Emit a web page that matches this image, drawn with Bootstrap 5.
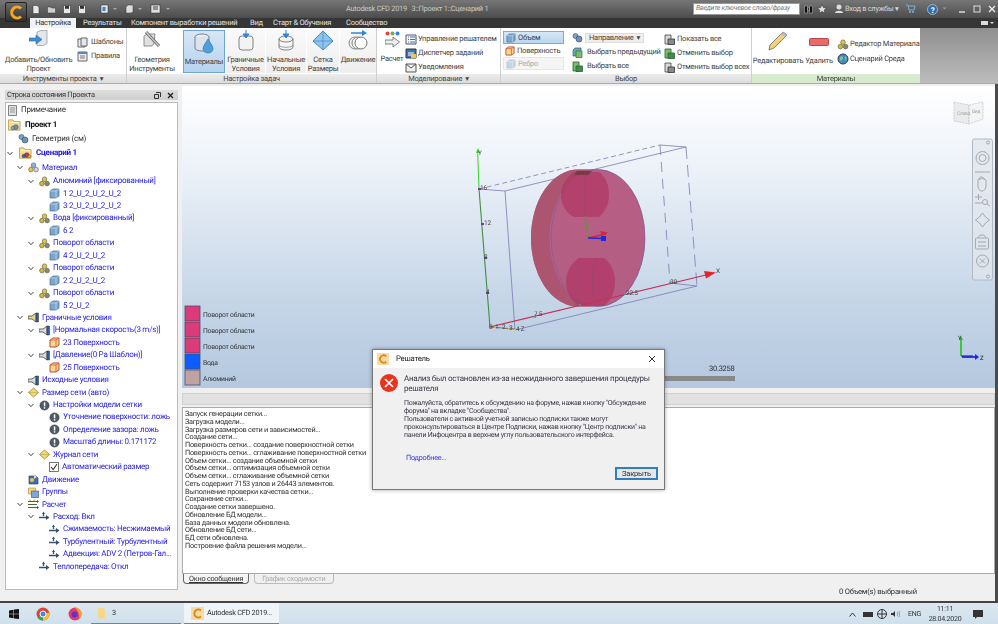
<!DOCTYPE html>
<html lang="ru">
<head>
<meta charset="utf-8">
<title>Autodesk CFD 2019</title>
<link href="https://cdn.jsdelivr.net/npm/bootstrap@5.3.0/dist/css/bootstrap.min.css" rel="stylesheet">
<style>
html,body{height:624px;width:998px;overflow:hidden;margin:0}
body{font-family:Roboto,"Liberation Sans",Arial,sans-serif;font-size:7.5px;letter-spacing:-.25px;line-height:1;color:#333;background:#4b4b4b;position:relative;filter:blur(.3px);text-rendering:geometricPrecision}
svg{flex-shrink:0}
.titlebar{height:18px;background:linear-gradient(#767676,#4c4c4c);color:#ddd;padding-left:32px;flex:0 0 18px}
.qa{gap:7px;flex:0 0 314px}
.qa2{margin-left:6px}
.ttl{flex:0 0 347px;font-size:7.4px;color:#c9c9c9;white-space:pre}
.srch{flex:0 0 107px;height:12px;background:#fff;border:1px solid #999;color:#777;font-style:italic;font-size:6.9px;line-height:9px;padding:0 2px;white-space:nowrap;overflow:hidden}
.tbtools{flex:0 0 auto;margin-left:4px}
.tbtools>*{flex:0 0 auto}
.m4{margin-left:4px}.m5{margin-left:5px}.m7{margin-left:7px}.m11{margin-left:11px}
.login{color:#d8d8d8;font-size:7.4px;flex:0 0 56px;white-space:nowrap;margin-left:1px}
.tabrow{height:10px;background:#363636;color:#e3e3e3;padding-left:30px;flex:0 0 10px}
.tabit{line-height:10px;white-space:nowrap;flex:0 0 auto}
.tabon{background:#f2f2f2;color:#333;text-align:center;line-height:10px;flex:0 0 46px;margin-right:7px;height:10px}
.tw1{flex-basis:48px}.tw2{flex-basis:119px}.tw3{flex-basis:23px}.tw4{flex-basis:73px}
.appbtn{left:5px;top:2px;width:22px;height:20px;background:linear-gradient(#6a6a6a,#2f2f2f);border:1px solid #222;border-radius:2px}
.ribbon{height:56px;background:#fff;border-bottom:1px solid #aaa;flex:0 0 56px}
.rgrp{border-right:1px solid #cfcfcf;height:55px;flex:0 0 auto}
.g1{width:127px;padding-left:3px}.g2{width:250px}.g3{width:124px;padding-left:2px}.g4{width:251px;padding-left:2px}.g5{width:168px;border:0}
.rbody{height:46px;background:#fff}
.rcap{height:9px;background:linear-gradient(#ececec,#dcdcdc);text-align:center;font-size:7.5px;line-height:9px;color:#444}
.g1 .rcap{margin-left:-3px}.g3 .rcap,.g4 .rcap{margin-left:-2px}
.capgreen{background:#d7ebcf}
.rfill{flex:1 1 auto;height:55px;background:linear-gradient(#8f8f8f,#bdbdbd)}
.bigb{text-align:center;font-size:7.5px;line-height:9.4px;color:#444;height:44px;margin-top:1px;padding-top:1px;white-space:nowrap;flex:0 0 auto}
.bigb svg{display:block;margin:0 auto 3px}
.bsel{background:linear-gradient(#d7e7f6,#b5d3ef);border:1px solid #6fa2d6;height:43px;margin-top:2px}
.bhov{background:linear-gradient(#fafafa,#eee);margin-left:1px}
.b71{width:71px}.b50{width:50px;margin-right:6px}.b42{width:42px}.b39{width:39px}.b40{width:40px}.b32{width:32px}.b37{width:36px}.b26{width:26px}.b52{width:52px;padding-top:2px}.b30{width:30px;padding-top:9px}
.ic2{margin-bottom:2px!important}.ic5{margin-bottom:5px!important}.ic10{margin-bottom:10px!important}
.smcol1{padding:7px 0 0 3px}.smcol5{padding:9px 0 0 3px}
.smal{height:14px;color:#444;gap:2px;white-space:nowrap}
.gap1{gap:1px}.gap4{gap:4px}
.mb1px{margin-bottom:1px}
.togcol{padding-top:3px;flex:0 0 62px;margin-right:6px}
.selcol{flex:0 0 93px;padding:4px 0 0 1px}
.ddrow{height:11px;gap:2px}
.togb{height:13px;color:#444;width:61px;gap:2px;padding-left:2px}
.togon{background:linear-gradient(#d7e7f6,#b9d6f1);border:1px solid #7caad9}
.togoff{color:#aaa;background:#f5f5f5;border:1px solid #e5e5e5}
.ddn{width:59px;height:10px;background:#eee;border:1px solid #ddd;color:#444;padding:0 3px;line-height:8px}
.mt3px{margin-top:2px}
.mainrow{height:517px;background:#f0f0f0;margin-right:3px;flex:0 0 517px}
.side{padding:6px 5px 0 5px;flex:0 0 182px;width:182px}
.sidehd{height:10px;background:linear-gradient(#ddd,#cfcfcf);font-size:7.4px;line-height:10px;padding:0 2px;color:#333;margin-right:-1px}
.hdbtns{gap:6px;padding-right:2px}
.treeb{height:488px;background:#fff;border:1px solid #bbb;margin-top:2px;overflow:hidden;margin-right:-1px}
.trow{height:12.45px;gap:3px;white-space:nowrap;color:#2a22e6;font-size:8px}
.trtall{height:14.4px}
.tbk{color:#333}.tbold{font-weight:700;color:#111}.tboldb{font-weight:700;color:#1a10e8}
.t0{padding-left:1px}.t1{padding-left:12px}.t2{padding-left:22px}.t3{padding-left:33px}.t4{padding-left:43px}
.crt{margin-left:-11px;margin-right:2px;flex:0 0 6px}
.work{flex:1 1 auto;min-width:0}
.vport{height:302px;background:linear-gradient(#fff 0,#eef3f9 25%,#c6d6e8 70%,#b4c8df 100%);margin-top:2px}
.vport svg{display:block}
.msgbar{height:12px;background:#e2e2e2;border:1px solid #d0d0d0;margin:5px 0 2px 0}
.logb{height:167px;background:#fff;border:1px solid #aaa;padding:2px 2px;font-size:7.3px;line-height:7.76px;color:#333;white-space:nowrap}
.btabs{height:11px;font-size:7.3px;padding-left:1px;gap:5px}
.btab1{padding:1px 5px;border:1px solid #666;border-top:0;border-radius:0 0 4px 4px;background:#f5f5f5;text-decoration:underline;color:#333}
.btab2{padding:1px 7px;border:1px solid #bbb;border-top:0;border-radius:0 0 4px 4px;color:#aaa}
.stat{height:15px;font-size:7.6px;padding-left:657px;padding-top:3px;color:#333}
.tbar{background:linear-gradient(#dce8f1,#cfdfeb);border-top:2px solid #444;flex:0 0 24px;height:24px}
.tslot{height:22px}.ts28{flex:0 0 28px}.ts30{flex:0 0 30px}.ts33{flex:0 0 33px}
.tapp{height:22px;border-bottom:2px solid #18b28f;font-size:7.3px;color:#333}
.tapp1{flex:0 0 90px;padding-left:6px;gap:6px;margin-right:3px}
.tapp2{flex:0 0 95px;padding-left:7px;background:#eef4f8;gap:3px;white-space:nowrap}
.tray{height:22px;font-size:7px;color:#333;padding-right:15px}
.tr7{margin-left:7px}.tr8{margin-left:8px}.tr4{margin-left:4px}
.clock{line-height:10px;width:36px;margin-left:6px}
.ntf{margin-left:10px}
.dlg{left:372px;top:349px;width:293px;height:141px;background:#f0f0f0;border:1px solid #777;box-shadow:0 0 4px rgba(0,0,0,.35)}
.dlghd{height:18px;background:#fff;padding:0 4px;font-size:7.8px;color:#222;gap:3px}
.dlgbody{padding:6px 6px 0 7px;gap:6px}
.dlgh1{font-size:8px;line-height:10px;color:#3a3a4a;width:250px;white-space:nowrap}
.dlgtx{font-size:7px;line-height:8px;color:#3a3a4a;margin:5px 0 0;white-space:nowrap}
.dlglnk{font-size:7.3px;color:#3a3ad8;margin:15px 0 0 2px;text-decoration:none;display:block}
.dlgft{padding:6px 6px 0 0}
.clsbtn{font-size:7.6px;letter-spacing:-.25px;width:43px;height:13px;padding:0;line-height:1;border:2px solid #2f7fbf;border-radius:0;background:#e6e6e6;color:#333}
</style>
</head>
<body class="d-flex flex-column">
<svg class="d-none">
<symbol id="cube" viewBox="0 0 11 11"><path d="M1 3l3-2h6v7l-3 2H1z" fill="#7ca6cc" stroke="#4b6f92" stroke-width=".7"/><path d="M1 3h6v7M7 3l3-2" fill="none" stroke="#c9def0" stroke-width=".7"/></symbol>
<symbol id="cuber" viewBox="0 0 11 11"><path d="M1 3l3-2h6v7l-3 2H1z" fill="#f4d98a" stroke="#b83a2a" stroke-width=".9"/><path d="M1 3h6v7M7 3l3-2" fill="none" stroke="#d9503a" stroke-width=".8"/></symbol>
<symbol id="atom" viewBox="0 0 11 11"><circle cx="5.5" cy="3.2" r="2.3" fill="#e4c53c" stroke="#555" stroke-width=".6"/><circle cx="2.9" cy="7.6" r="2.3" fill="#d8b62f" stroke="#555" stroke-width=".6"/><circle cx="8.1" cy="7.6" r="2.3" fill="#8a8a6a" stroke="#555" stroke-width=".6"/></symbol>
<symbol id="atomb" viewBox="0 0 11 11"><circle cx="5.5" cy="3.2" r="2.3" fill="#8fb4dc" stroke="#555" stroke-width=".6"/><circle cx="2.9" cy="7.6" r="2.3" fill="#e4c53c" stroke="#555" stroke-width=".6"/><circle cx="8.1" cy="7.6" r="2.3" fill="#c9d7e6" stroke="#555" stroke-width=".6"/></symbol>
<symbol id="bnd" viewBox="0 0 11 11"><path d="M0 4h4l4-3v9L4 7H0z" fill="#d5dbe2" stroke="#444" stroke-width=".8"/><path d="M8 1h2.5v9H8z" fill="#2f5f9a" stroke="#333" stroke-width=".5"/></symbol>
<symbol id="bndy" viewBox="0 0 11 11"><path d="M0 4h4l4-3v9L4 7H0z" fill="#e6d78c" stroke="#444" stroke-width=".8"/><path d="M8 1h2.5v9H8z" fill="#2f5f9a" stroke="#333" stroke-width=".5"/></symbol>
<symbol id="inf" viewBox="0 0 11 11"><circle cx="5.5" cy="5.5" r="4.6" fill="#4e5a68" stroke="#222" stroke-width=".5"/><rect x="4.8" y="2.4" width="1.5" height="4" fill="#fff"/><rect x="4.8" y="7.2" width="1.5" height="1.4" fill="#fff"/></symbol>
<symbol id="dia" viewBox="0 0 11 11"><path d="M5.5 1l5 4.5-5 4.5-5-4.5z" fill="#f0d977" stroke="#8d7c2c" stroke-width=".7"/><path d="M.5 5.5h10" stroke="#b8a345" stroke-width=".6"/></symbol>
<symbol id="flow" viewBox="0 0 11 11"><path d="M4.5 2v3M0 6.5h8" stroke="#38506b" stroke-width="1.3"/><path d="M7 4l3.5 2.5L7 9z" fill="#38506b"/><path d="M3 3l1.5-2.5L6 3z" fill="#38506b"/></symbol>
<symbol id="flow3" viewBox="0 0 11 11"><path d="M0 2.5h9M0 5.5h9M0 8.5h9" stroke="#4b6a3a" stroke-width="1.2"/><path d="M1 1.3h2M5 1.3h2" stroke="#d2c04b" stroke-width="1"/><path d="M9 1l2 1.5L9 4zM9 7l2 1.5L9 10z" fill="#38506b"/></symbol>
<symbol id="fold" viewBox="0 0 15 14"><path d="M.5 1h5l1.5 2H14v10H.5z" fill="#f7dd8f" stroke="#a98c36" stroke-width=".8"/><path d="M2 4h11" stroke="#fff3c7"/><circle cx="9" cy="9.5" r="2.8" fill="#6c95bf" stroke="#334" stroke-width=".6"/><circle cx="5.5" cy="10.5" r="2" fill="#8ab0d4" stroke="#334" stroke-width=".6"/></symbol>
<symbol id="folds" viewBox="0 0 15 14"><path d="M.5 1h5l1.5 2H14v10H.5z" fill="#f7dd8f" stroke="#a98c36" stroke-width=".8"/><path d="M2 4h11" stroke="#fff3c7"/><circle cx="9" cy="9.5" r="2.8" fill="#d23a3a" stroke="#334" stroke-width=".6"/><circle cx="5.5" cy="10.5" r="2" fill="#3367c2" stroke="#334" stroke-width=".6"/><circle cx="12" cy="11" r="1.6" fill="#e9b936" stroke="#334" stroke-width=".5"/></symbol>
<symbol id="geo" viewBox="0 0 11 11"><circle cx="3.5" cy="4" r="2.5" fill="#7fa6cd" stroke="#345" stroke-width=".6"/><circle cx="7" cy="7" r="3" fill="#6d93b9" stroke="#345" stroke-width=".6"/></symbol>
<symbol id="note" viewBox="0 0 11 11"><path d="M1.5.5h8v10h-8z" fill="#dfe3e8" stroke="#666" stroke-width=".8"/><path d="M3 3h5M3 5h5M3 7h5" stroke="#777" stroke-width=".7"/></symbol>
<symbol id="chk" viewBox="0 0 10 10"><rect x=".5" y=".5" width="9" height="9" fill="#fff" stroke="#555" stroke-width=".8"/><path d="M2 5l2.2 2.5L8 2" fill="none" stroke="#333" stroke-width="1.1"/></symbol>
<symbol id="car" viewBox="0 0 6 5"><path d="M.5 1L3 3.7 5.500 1" fill="none" stroke="#444" stroke-width="1"/></symbol>
<symbol id="mov" viewBox="0 0 11 11"><path d="M1 2h7l2 2v6H1z" fill="#3e72b5" stroke="#334" stroke-width=".6"/><circle cx="4" cy="6" r="2" fill="#e8c94a"/><path d="M6 1l3 2-3 2z" fill="#d9d9d9"/></symbol>
<symbol id="grp" viewBox="0 0 11 11"><path d="M.5 1h7v6h-7z" fill="#f1d887" stroke="#a98c36" stroke-width=".6"/><path d="M3.500 4h7v6.500h-7z" fill="#7ea8d3" stroke="#446" stroke-width=".6"/></symbol>
<symbol id="bl" viewBox="0 0 11 11"><path d="M1 3l2-2h6v8H1z" fill="#6f9fc9" stroke="#2f6f3f" stroke-width=".7"/><path d="M4 4h6v6.500H4z" fill="#7cbc6a" stroke="#2f6f3f" stroke-width=".7"/></symbol>
<symbol id="sel" viewBox="0 0 11 11"><path d="M1 1h6v9H1z" fill="#7cbc6a" stroke="#2a5f33" stroke-width=".8"/><path d="M4 5h6.500v5.500H4z" fill="#3f8f4a" stroke="#2a5f33" stroke-width=".8"/></symbol>
<symbol id="selg" viewBox="0 0 11 11"><path d="M1 1h6v9H1z" fill="#d8d8d8" stroke="#444" stroke-width=".8"/><path d="M4 5h6.500v5.500H4z" fill="#8a8a8a" stroke="#333" stroke-width=".8"/></symbol>
</svg>

<header class="titlebar d-flex align-items-center">
  <div class="qa d-flex align-items-center">
    <svg width="8" height="9"><path d="M1 .5h4l2 2v6H1z" fill="#e8e8e8" stroke="#333" stroke-width=".5"/></svg>
    <svg width="9" height="9"><path d="M.5 2h3l1 1h4v5h-8z" fill="#cfcfcf" stroke="#333" stroke-width=".5"/></svg>
    <svg width="8" height="9"><path d="M.5.500h7v8h-7z" fill="#e6e6e6" stroke="#222" stroke-width=".5"/><path d="M2 .8h4v3H2z" fill="#333"/></svg>
    <svg width="9" height="9"><path d="M.5.500h7v8h-7z" fill="#e6e6e6" stroke="#222" stroke-width=".5"/><path d="M2 .8h4v3H2z" fill="#333"/></svg>
    <svg class="qa2" width="18" height="10"><rect x="1" y="1" width="7" height="8" fill="#dbe6f0" stroke="#333" stroke-width=".5"/><rect x="2.500" y="3" width="3" height="4" fill="#4a7fb5"/><path d="M13 4l2 2 2-2z" fill="#aaa"/></svg>
    <svg width="18" height="10"><path d="M1 3l2-2h5v7l-2 1H1z" fill="#ddd" stroke="#333" stroke-width=".5"/><path d="M13 4l2 2 2-2z" fill="#aaa"/></svg>
    <svg width="22" height="10"><rect x="1" y="1" width="9" height="8" fill="#ddd" stroke="#333" stroke-width=".5"/><path d="M3 3h5M3 5h5" stroke="#444"/><path d="M16 4l2 2 2-2z" fill="#aaa"/></svg>
  </div>
  <div class="ttl">Autodesk CFD 2019   3::Проект 1::Сценарий 1</div>
  <div class="srch">Введите ключевое слово/фразу</div>
  <div class="tbtools d-flex align-items-center">
    <svg width="9" height="9"><path d="M.5 1h3v7h-3zM5.500 1h3v7h-3zM3.500 3h2v2h-2z" fill="#111" stroke="#ddd" stroke-width=".4"/></svg>
    <svg class="m4" width="10" height="10"><path d="M5 .5l1.400 3 3.300.3-2.500 2.200.8 3.300L5 7.500 2 9.300l.8-3.300L.3 3.800l3.300-.3z" fill="#ddd" stroke="#222" stroke-width=".5"/></svg>
    <svg class="m7" width="10" height="10"><circle cx="5" cy="3" r="2.500" fill="#ddd"/><path d="M1 9c0-3 8-3 8 0z" fill="#ddd"/></svg>
    <span class="login">Вход в службы ▾</span>
    <svg class="m5" width="10" height="10"><path d="M0 1h2l1 5h5l1-4H3" fill="none" stroke="#7fb0dd"/><circle cx="4" cy="8" r="1" fill="#7fb0dd"/><circle cx="7" cy="8" r="1" fill="#7fb0dd"/></svg>
    <svg class="m11" width="11" height="11"><circle cx="5.500" cy="5.500" r="5" fill="#2f6fb5" stroke="#ddd" stroke-width=".6"/><text x="5.500" y="8.500" font-size="8" font-weight="700" text-anchor="middle" fill="#fff">?</text></svg>
    <svg class="m4" width="5" height="4"><path d="M.5.500l2 2 2-2z" fill="#999"/></svg>
    <svg class="m11" width="8" height="8"><path d="M1 7h6" stroke="#ddd" stroke-width="1.500"/></svg>
    <svg class="m7" width="8" height="8"><rect x="1" y="1" width="6" height="6" fill="none" stroke="#ddd"/></svg>
    <svg class="m7" width="8" height="8"><path d="M1 1l6 6M7 1l-6 6" stroke="#eee" stroke-width="1.300"/></svg>
  </div>
</header>
<div class="appbtn position-absolute d-flex align-items-center justify-content-center">
  <svg width="15" height="15" viewBox="0 0 15 15"><path d="M12 3.500A5.500 5.500 0 1 0 12 11.500" fill="none" stroke="#f5a623" stroke-width="3"/></svg>
</div>

<nav class="tabrow d-flex">
  <span class="tabon">Настройка</span>
  <span class="tabit tw1">Результаты</span>
  <span class="tabit tw2">Компонент выработки решений</span>
  <span class="tabit tw3">Вид</span>
  <span class="tabit tw4">Старт &amp; Обучения</span>
  <span class="tabit">Сообщество</span>
  <span class="ms-auto me-1 d-flex align-items-center"><svg width="14" height="6"><rect x="1" y="1" width="7" height="4" fill="#ddd"/><path d="M10 2l2 2 2-2z" fill="#ddd"/></svg></span>
</nav>

<section class="ribbon d-flex">
  <div class="rgrp g1">
    <div class="rbody d-flex">
      <div class="bigb b71">
        <svg width="20" height="22" viewBox="0 0 20 22"><path d="M8 2l4-1.500h6v13l-4 2H8z" fill="#e3e7eb" stroke="#8a939c" stroke-width=".7"/><path d="M0 8h7V5l6 4.500L7 14v-3H0z" fill="#3f8fd6" stroke="#2a6aa5" stroke-width=".6"/></svg>
        Добавить/Обновить<br>Проект
      </div>
      <div class="d-flex flex-column smcol1">
        <div class="smal d-flex align-items-center"><svg width="12" height="11"><path d="M1 2h7v8H1z" fill="#eee" stroke="#666"/><path d="M4 1h6v8H4z" fill="#dfe8f0" stroke="#666"/></svg>Шаблоны</div>
        <div class="smal d-flex align-items-center"><svg width="12" height="11"><path d="M1 1h9v9H1z" fill="#f0f0f0" stroke="#666"/><path d="M1 1h9v2H1z" fill="#5b87b5"/><path d="M3 5h5M3 7h5" stroke="#777"/></svg>Правила</div>
      </div>
    </div>
    <div class="rcap">Инструменты проекта &nbsp;▾</div>
  </div>
  <div class="rgrp g2">
    <div class="rbody d-flex">
      <div class="bigb b50">
        <svg width="22" height="22" viewBox="0 0 22 22"><path d="M3 6l3-2h8l-1 9-2 3H3z" fill="#e0e0e0" stroke="#777" stroke-width=".8"/><path d="M5 2l13 14" stroke="#666" stroke-width="3"/><path d="M5 2l13 14" stroke="#ccc" stroke-width="1.300"/></svg>
        Геометрия<br>Инструменты
      </div>
      <div class="bigb bsel b42">
        <svg width="22" height="22" viewBox="0 0 22 22"><ellipse cx="9" cy="5" rx="7" ry="3" fill="#e7edf3" stroke="#667" stroke-width=".8"/><path d="M2 5v11c0 4 14 4 14 0V5" fill="#dbe3ec" stroke="#667" stroke-width=".8"/><path d="M15 7c-3 5-5 7-5 10a5 4 0 0 0 10 0c0-3-2-5-5-10z" fill="#4f9fdc" stroke="#2d6f9f" stroke-width=".6"/></svg>
        Материалы
      </div>
      <div class="bigb bhov b39">
        <svg width="20" height="22" viewBox="0 0 20 22"><rect x="3" y="6" width="14" height="14" rx="3" fill="#f3f3f3" stroke="#666" stroke-width=".8"/><path d="M10 0v6M7 4l3 4 3-4z" stroke="#2f86d4" fill="#2f86d4"/></svg>
        Граничные<br>Условия
      </div>
      <div class="bigb bhov b40">
        <svg width="20" height="22" viewBox="0 0 20 22"><ellipse cx="10" cy="9" rx="7" ry="3" fill="#f3f3f3" stroke="#666" stroke-width=".8"/><path d="M3 9v8c0 4 14 4 14 0V9" fill="none" stroke="#666" stroke-width=".8"/><path d="M3 15c0 3 14 3 14 0" fill="none" stroke="#666" stroke-width=".6"/><path d="M10 0v6M7 4l3 4 3-4z" stroke="#2f86d4" fill="#2f86d4"/></svg>
        Начальные<br>Условия
      </div>
      <div class="bigb bhov b32">
        <svg width="22" height="22" viewBox="0 0 22 22"><path d="M11 1L21 11 11 20 1 11z" fill="#8cc4ee" stroke="#3b83bf" stroke-width=".9"/><path d="M11 1v19M1 11h20" stroke="#3b83bf" stroke-width=".6"/></svg>
        Сетка<br>Размеры
      </div>
      <div class="bigb bhov b37">
        <svg width="22" height="22" viewBox="0 0 22 22"><path d="M4 3h12" stroke="#2f86d4" stroke-width="1.500"/><path d="M15 0l5 3-5 3z" fill="#2f86d4"/><circle cx="8" cy="13" r="6" fill="#eee" stroke="#888"/><circle cx="11" cy="13" r="6" fill="#f4f4f4" stroke="#888"/><circle cx="14" cy="13" r="6" fill="#fff" stroke="#777"/></svg>
        Движение
      </div>
    </div>
    <div class="rcap">Настройка задач</div>
  </div>
  <div class="rgrp g3">
    <div class="rbody d-flex">
      <div class="bigb b26">
        <svg class="ic2" width="15" height="22" viewBox="0 0 15 22"><circle cx="2.500" cy="3.500" r="2" fill="#e2453c"/><circle cx="7.500" cy="3.500" r="2" fill="#67b34c"/><circle cx="12.500" cy="3.500" r="2" fill="#3d7fcf"/><path d="M0 10h8V7l6.500 5L8 17v-3H0z" fill="#eee" stroke="#666" stroke-width=".8"/></svg>
        Расчет
      </div>
      <div class="d-flex flex-column pt-1">
        <div class="smal gap1 d-flex align-items-center"><svg width="12" height="11"><path d="M1 1h10v9H1z" fill="#f2f6fa" stroke="#556"/><path d="M3 3h1M5 3h5M3 5.500h1M5 5.500h5M3 8h1M5 8h5" stroke="#3c74b0"/></svg>Управление решателем</div>
        <div class="smal gap1 d-flex align-items-center"><svg width="12" height="11"><path d="M1 1h10v9H1z" fill="#3c74b0" stroke="#334"/><path d="M3 5h6M3 7h3" stroke="#fff"/><rect x="6" y="6" width="5" height="4" fill="#e8c94a"/></svg>Диспетчер заданий</div>
        <div class="smal gap1 d-flex align-items-center"><svg width="12" height="11"><path d="M1 2h10v8H1z" fill="#eee" stroke="#555"/><path d="M1 2l5 4 5-4" fill="none" stroke="#555"/></svg>Уведомления</div>
      </div>
    </div>
    <div class="rcap">Моделирование &nbsp;▾</div>
  </div>
  <div class="rgrp g4">
    <div class="rbody d-flex">
      <div class="togcol d-flex flex-column">
        <div class="togb togon d-flex align-items-center"><svg width="10" height="10"><use href="#cube"/></svg>Объем</div>
        <div class="togb d-flex align-items-center"><svg width="10" height="10"><use href="#cuber"/></svg>Поверхность</div>
        <div class="togb togoff d-flex align-items-center"><svg width="10" height="10" opacity=".4"><use href="#cube"/></svg>Ребро</div>
      </div>
      <div class="selcol d-flex flex-column">
        <div class="ddrow d-flex align-items-center"><svg width="11" height="11"><use href="#geo"/></svg><div class="ddn d-flex justify-content-between"><span>Направление</span><span>▾</span></div></div>
        <div class="smal gap4 mt3px d-flex align-items-center"><svg width="11" height="11"><use href="#bl"/></svg>Выбрать предыдущий</div>
        <div class="smal gap4 d-flex align-items-center"><svg width="11" height="11"><use href="#sel"/></svg>Выбрать все</div>
      </div>
      <div class="d-flex flex-column pt-1">
        <div class="smal d-flex align-items-center"><svg width="11" height="11"><use href="#selg"/></svg>Показать все</div>
        <div class="smal d-flex align-items-center"><svg width="11" height="11"><use href="#sel"/></svg>Отменить выбор</div>
        <div class="smal d-flex align-items-center"><svg width="11" height="11"><use href="#selg"/></svg>Отменить выбор всех</div>
      </div>
    </div>
    <div class="rcap">Выбор</div>
  </div>
  <div class="rgrp g5">
    <div class="rbody d-flex">
      <div class="bigb b52">
        <svg class="ic5" width="20" height="20" viewBox="0 0 20 20"><path d="M15 1l4 3L6 17l-5 2 1-5z" fill="#f0d27a" stroke="#666" stroke-width=".8"/><path d="M15 1l4 3-2 2-4-3z" fill="#b8b8b8"/></svg>
        Редактировать
      </div>
      <div class="bigb b30">
        <svg class="ic10" width="20" height="8" viewBox="0 0 20 8"><rect x=".5" y=".5" width="19" height="7" rx="1" fill="#e86a6a" stroke="#b44"/></svg>
        Удалить
      </div>
      <div class="d-flex flex-column smcol5">
        <div class="smal gap1 mb1px d-flex align-items-center"><svg width="12" height="11"><use href="#atom"/></svg>Редактор Материала</div>
        <div class="smal gap1 d-flex align-items-center"><svg width="12" height="12"><circle cx="6" cy="6" r="5" fill="#3f8fbf" stroke="#335"/><path d="M3 4c3-2 4 1 2 3s-3 0-2-3zM8 3l2 2-2 3z" fill="#7fc28a"/></svg>Сценарий Среда</div>
      </div>
    </div>
    <div class="rcap capgreen">Материалы</div>
  </div>
  <div class="rfill"></div>
</section>

<main class="mainrow d-flex">
  <aside class="side">
    <div class="sidehd d-flex justify-content-between align-items-center">
      <span>Строка состояния Проекта</span>
      <span class="hdbtns d-flex align-items-center"><svg width="7" height="7"><path d="M2 .5h4.500v4.500M.5 2.500h4v4h-4z" fill="none" stroke="#333"/></svg><svg width="7" height="7"><path d="M1 1l5 5M6 1l-5 5" stroke="#222" stroke-width="1.300"/></svg></span>
    </div>
    <div class="treeb">
      <div class="trow trtall t0 tbk d-flex align-items-center"><svg width="11" height="11"><use href="#note"/></svg>Примечание</div>
      <div class="trow trtall t0 tbold d-flex align-items-center"><svg width="15" height="12"><use href="#fold"/></svg>Проект 1</div>
      <div class="trow trtall t1 tbk d-flex align-items-center"><svg width="11" height="11"><use href="#geo"/></svg>Геометрия (см)</div>
      <div class="trow trtall t1 tboldb d-flex align-items-center"><svg class="crt" width="6" height="5"><use href="#car"/></svg><svg width="15" height="12"><use href="#folds"/></svg>Сценарий 1</div>
      <div class="trow trtall t2 d-flex align-items-center"><svg class="crt" width="6" height="5"><use href="#car"/></svg><svg width="11" height="11"><use href="#atomb"/></svg>Материал</div>
      <div class="trow t3 d-flex align-items-center"><svg class="crt" width="6" height="5"><use href="#car"/></svg><svg width="11" height="11"><use href="#atom"/></svg>Алюминий [фиксированный]</div>
      <div class="trow t4 d-flex align-items-center"><svg width="11" height="11"><use href="#cube"/></svg>1 2_U_2_U_2_U_2</div>
      <div class="trow t4 d-flex align-items-center"><svg width="11" height="11"><use href="#cube"/></svg>3 2_U_2_U_2_U_2</div>
      <div class="trow t3 d-flex align-items-center"><svg class="crt" width="6" height="5"><use href="#car"/></svg><svg width="11" height="11"><use href="#atom"/></svg>Вода [фиксированный]</div>
      <div class="trow t4 d-flex align-items-center"><svg width="11" height="11"><use href="#cube"/></svg>6 2</div>
      <div class="trow t3 d-flex align-items-center"><svg class="crt" width="6" height="5"><use href="#car"/></svg><svg width="11" height="11"><use href="#atom"/></svg>Поворот области</div>
      <div class="trow t4 d-flex align-items-center"><svg width="11" height="11"><use href="#cube"/></svg>4 2_U_2_U_2</div>
      <div class="trow t3 d-flex align-items-center"><svg class="crt" width="6" height="5"><use href="#car"/></svg><svg width="11" height="11"><use href="#atom"/></svg>Поворот области</div>
      <div class="trow t4 d-flex align-items-center"><svg width="11" height="11"><use href="#cube"/></svg>2 2_U_2_U_2</div>
      <div class="trow t3 d-flex align-items-center"><svg class="crt" width="6" height="5"><use href="#car"/></svg><svg width="11" height="11"><use href="#atom"/></svg>Поворот области</div>
      <div class="trow t4 d-flex align-items-center"><svg width="11" height="11"><use href="#cube"/></svg>5 2_U_2</div>
      <div class="trow t2 d-flex align-items-center"><svg class="crt" width="6" height="5"><use href="#car"/></svg><svg width="11" height="11"><use href="#bndy"/></svg>Граничные условия</div>
      <div class="trow t3 d-flex align-items-center"><svg class="crt" width="6" height="5"><use href="#car"/></svg><svg width="11" height="11"><use href="#bnd"/></svg>[Нормальная скорость(3 m/s)]</div>
      <div class="trow t4 d-flex align-items-center"><svg width="11" height="11"><use href="#cuber"/></svg>23 Поверхность</div>
      <div class="trow t3 d-flex align-items-center"><svg class="crt" width="6" height="5"><use href="#car"/></svg><svg width="11" height="11"><use href="#bnd"/></svg>[Давление(0 Ра Шаблон)]</div>
      <div class="trow t4 d-flex align-items-center"><svg width="11" height="11"><use href="#cuber"/></svg>25 Поверхность</div>
      <div class="trow t2 d-flex align-items-center"><svg width="11" height="11"><use href="#bnd"/></svg>Исходные условия</div>
      <div class="trow t2 d-flex align-items-center"><svg class="crt" width="6" height="5"><use href="#car"/></svg><svg width="11" height="11"><use href="#dia"/></svg>Размер сети (авто)</div>
      <div class="trow t3 d-flex align-items-center"><svg class="crt" width="6" height="5"><use href="#car"/></svg><svg width="11" height="11"><use href="#inf"/></svg>Настройки модели сетки</div>
      <div class="trow t4 d-flex align-items-center"><svg width="11" height="11"><use href="#inf"/></svg>Уточнение поверхности: ложь</div>
      <div class="trow t4 d-flex align-items-center"><svg width="11" height="11"><use href="#inf"/></svg>Определение зазора: ложь</div>
      <div class="trow t4 d-flex align-items-center"><svg width="11" height="11"><use href="#inf"/></svg>Масштаб длины: 0.171172</div>
      <div class="trow t3 d-flex align-items-center"><svg class="crt" width="6" height="5"><use href="#car"/></svg><svg width="11" height="11"><use href="#dia"/></svg>Журнал сети</div>
      <div class="trow t4 d-flex align-items-center"><svg width="10" height="10"><use href="#chk"/></svg>Автоматический размер</div>
      <div class="trow t2 d-flex align-items-center"><svg width="11" height="11"><use href="#mov"/></svg>Движение</div>
      <div class="trow t2 d-flex align-items-center"><svg width="11" height="11"><use href="#grp"/></svg>Группы</div>
      <div class="trow t2 d-flex align-items-center"><svg class="crt" width="6" height="5"><use href="#car"/></svg><svg width="11" height="11"><use href="#flow3"/></svg>Расчет</div>
      <div class="trow t3 d-flex align-items-center"><svg class="crt" width="6" height="5"><use href="#car"/></svg><svg width="11" height="11"><use href="#flow"/></svg>Расход: Вкл</div>
      <div class="trow t4 d-flex align-items-center"><svg width="11" height="11"><use href="#flow"/></svg>Сжимаемость: Несжимаемый</div>
      <div class="trow t4 d-flex align-items-center"><svg width="11" height="11"><use href="#flow"/></svg>Турбулентный: Турбулентный</div>
      <div class="trow t4 d-flex align-items-center"><svg width="11" height="11"><use href="#flow"/></svg>Адвекция: ADV 2 (Петров-Гал...</div>
      <div class="trow t3 d-flex align-items-center"><svg width="11" height="11"><use href="#flow"/></svg>Теплопередача: Откл</div>
    </div>
  </aside>
  <div class="work d-flex flex-column">
    <div class="vport">
      <svg width="813" height="302" viewBox="182 86 813 302" font-family="Roboto, Arial, sans-serif">
        <g fill="none" stroke="#7c7ab4" stroke-width=".8">
          <path d="M479 189L660 145" stroke-dasharray="5 3"/>
          <path d="M660 145L670 283" stroke-dasharray="10 7"/>
          <path d="M686 147L697 286" stroke-dasharray="12 6"/>
          <path d="M479 189L505 191L686 147L660 145M505 191L515 330" />
          <path d="M515 330L697 286L670 283"/>
        </g>
        <path d="M578 169.500h20a47 68.500 0 0 1 0 137h-20a47 68.500 0 0 1 0-137z" fill="#b3587c" fill-opacity=".93"/>
        <path d="M578 169.500a47 68.500 0 0 0 0 137h20a47 68.500 0 0 1-27-126c6-7 16-11 27-11z" fill="#ab5570"/>
        <ellipse cx="598" cy="238" rx="47" ry="68.500" fill="#b65c84" fill-opacity=".6" stroke="#6e5a9e" stroke-width=".6"/>
        <path d="M574 172h25c7 5 10 14 10 23s-4 17-10 22h-25c-9-5-13-13-13-22s5-18 13-23z" fill="#b03662" fill-opacity=".72"/>
        <path d="M579 258h25c7 5 11 14 11 24s-4 18-11 24h-25c-8-6-13-14-13-24s5-19 13-24z" fill="#b03662" fill-opacity=".72"/>
        <path d="M577 171h15l-4 4h-14z" fill="#7a3a44"/>
        <path d="M585 172v45M579 258v48M596 258c-5 12-5 34 0 48" stroke="#8a4a70" stroke-width=".5" fill="none"/>
        <path d="M477.700 153.300L479 189" stroke="#38d42a" stroke-width="1"/>
        <path d="M479 189L490 327" stroke="#3f8f3f" stroke-width="1.100"/>
        <path d="M476 153l2-5 2 5z" fill="#38d42a"/>
        <path d="M490 327L706 275" stroke="#c92f55" stroke-width="1.100"/>
        <path d="M704 271l12 1.500-10 6z" fill="#e3262d"/>
        <path d="M490 327l25 2" stroke="#555" stroke-width=".8"/>
        <g fill="#7a2fc0"><rect x="478" y="188" width="3" height="2"/><rect x="481" y="223" width="3" height="2"/><rect x="484" y="257" width="3" height="2"/><rect x="486" y="292" width="3" height="2"/></g>
        <g fill="#e6d72a"><circle cx="495" cy="328" r="1"/><circle cx="502" cy="329" r="1"/><circle cx="509" cy="329" r="1"/><circle cx="515" cy="330" r="1"/></g>
        <g fill="#1fa6b5"><circle cx="535" cy="317" r="1"/><circle cx="580" cy="305" r="1"/><circle cx="625" cy="294" r="1"/><circle cx="670" cy="283" r="1"/></g>
        <g font-size="6.500" fill="#444"><text x="478" y="155">Y</text><text x="480" y="190">16</text><text x="484" y="225">12</text><text x="484" y="259">8</text><text x="486" y="294">4</text><text x="489" y="329">0</text><text x="495" y="329">1</text><text x="502" y="329">2</text><text x="509" y="330">3</text><text x="516" y="331">4 Z</text><text x="534" y="316">7.5</text><text x="626" y="295">22.5</text><text x="670" y="284">30</text><text x="716" y="273">X</text></g>
        <path d="M585 216L588.300 237.700" stroke="#4fa02a" stroke-width="1.200"/>
        <path d="M588 238L606 234" stroke="#d0283a" stroke-width="1.400"/><path d="M600 231l8 1.500-6 3z" fill="#d0283a"/>
        <path d="M588 238L604 238.500" stroke="#1a2ae0" stroke-width="1.600"/><rect x="601" y="236" width="5" height="5" fill="#1a2ae0"/>
        <g stroke="#46506a" stroke-width=".8">
          <rect x="185" y="306" width="15" height="15" fill="#dc3a78"/>
          <rect x="185" y="322" width="15" height="15" fill="#dc3a78"/>
          <rect x="185" y="338" width="15" height="15" fill="#dc3a78"/>
          <rect x="185" y="354" width="15" height="15" fill="#0c5cff"/>
          <rect x="185" y="370" width="15" height="15" fill="#bfa3a3"/>
        </g>
        <g font-size="6.800" fill="#333"><text x="203" y="317">Поворот области</text><text x="203" y="333">Поворот области</text><text x="203" y="349">Поворот области</text><text x="203" y="365">Вода</text><text x="203" y="381">Алюминий</text></g>
        <text x="709" y="371" font-size="7.500" fill="#333">30.3258</text>
        <rect x="660" y="376" width="75" height="5" fill="#888"/>
        <g opacity=".75">
          <path d="M954 102l15 3v19l-15-3z" fill="#e6e6e6" stroke="#aaa" stroke-dasharray="2 1" stroke-width=".7"/>
          <path d="M969 105l14-3v17l-14 5z" fill="#f2f2f2" stroke="#aaa" stroke-dasharray="2 1" stroke-width=".7"/>
          <text x="957" y="115" font-size="5" fill="#888">Слева</text><text x="972" y="113" font-size="5" fill="#888">Вид</text>
        </g>
        <rect x="972.500" y="139" width="20" height="141" rx="2" fill="#dfe6ee" fill-opacity=".75" stroke="#b3b9c0"/>
        <g fill="none" stroke="#a5a9ad" stroke-width="1">
          <circle cx="988" cy="142.500" r="1.500"/><circle cx="988" cy="276.500" r="1.500"/>
          <circle cx="982.500" cy="158" r="6.500"/><circle cx="982.500" cy="158" r="3.500"/>
          <path d="M975 172h15"/>
          <path d="M978 187v-7c0-2 2-2 2 0v-2c0-2 2-2 2 0v1c0-2 2-2 2 0v1c0-1 2-1 2 1v5c0 3-2 5-4 5s-3-1-4-4z"/>
          <path d="M975 197h7M978.500 194v6M975 203h7"/><circle cx="985" cy="202" r="2.500"/><path d="M987 204l3 2"/>
          <path d="M982.500 213l3 4 4 3-4 3-3 4-3-4-4-3 4-3z"/>
          <rect x="975.500" y="238" width="13" height="11" rx="1"/><path d="M978 242h8M978 246h8M978 238l2-3h4l2 3"/>
          <circle cx="982.500" cy="261" r="6"/><path d="M980 258.500l5 5M985 258.500l-5 5"/>
        </g>
        <path d="M961 356v-18" stroke="#21c021" stroke-width="1.600"/><path d="M959 340l2-4 2 4z" fill="#21c021"/>
        <path d="M961 356h12" stroke="#d4222a" stroke-width="1.600"/><path d="M962 357h15" stroke="#1a2ae0" stroke-width="1.800"/><path d="M975 354l4 3-4 3z" fill="#1a2ae0"/>
        <text x="958" y="340" font-size="6" fill="#222">Y</text><text x="980" y="360" font-size="6" fill="#222">Z</text>
      </svg>
    </div>
    <div class="msgbar"></div>
    <div class="logb">
      Запуск генерации сетки...<br>Загрузка модели...<br>Загрузка размеров сети и зависимостей...<br>Создание сети...<br>Поверхность сетки... создание поверхностной сетки<br>Поверхность сетки... сглаживание поверхностной сетки<br>Объем сетки... создание объемной сетки<br>Объем сетки... оптимизация объемной сетки<br>Объем сетки... сглаживание объемной сетки<br>Сеть содержит  7153 узлов и 26443 элементов.<br>Выполнение проверки качества сетки...<br>Сохранение сетки...<br>Создание сетки завершено.<br>Обновление БД модели...<br>База данных модели обновлена.<br>Обновление БД сети...<br>БД сети обновлена.<br>Построение файла решения модели...
    </div>
    <div class="btabs d-flex align-items-start">
      <span class="btab1">Окно сообщения</span><span class="btab2">График сходимости</span>
    </div>
    <div class="stat">0 Объем(s) выбранный</div>
  </div>
</main>

<footer class="tbar d-flex align-items-start">
  <div class="tslot ts28 d-flex align-items-center justify-content-center">
    <svg width="10" height="10"><path d="M0 1.500l4.500-.8v4H0zM5 .6L10 0v4.700H5zM0 5.300h4.500v4L0 8.600zM5 5.300h5V10l-5-.6z" fill="#111"/></svg>
  </div>
  <div class="tslot ts30 d-flex align-items-center justify-content-center">
    <svg width="14" height="14" viewBox="0 0 14 14"><circle cx="7" cy="7" r="6.500" fill="#db4437"/><path d="M7 7L1.500 10.500A6.500 6.500 0 0 0 7 13.500z" fill="#2fa84f"/><path d="M7 7l6 -1.500A6.500 6.500 0 0 1 7 13.500z" fill="#f6c22d"/><circle cx="7" cy="7" r="3" fill="#4285f4" stroke="#fff"/></svg>
  </div>
  <div class="tslot ts33 d-flex align-items-center justify-content-center">
    <svg width="14" height="14" viewBox="0 0 14 14"><circle cx="7" cy="7" r="6.500" fill="#e23a6e"/><path d="M7 .5A6.500 6.500 0 0 1 13.500 7c0 2-1 4-3 5.200C12 9 11 5 7 .5z" fill="#fba21c"/><circle cx="6.500" cy="7.500" r="3" fill="#6a2fc0"/></svg>
  </div>
  <div class="tapp tapp1 d-flex align-items-center"><svg width="9" height="13"><path d="M1 1h5l2 2v9l-7-1z" fill="#f6d888"/></svg>3</div>
  <div class="tapp tapp2 d-flex align-items-center"><svg width="13" height="13" viewBox="0 0 13 13"><rect width="13" height="13" fill="#fbd9a5"/><path d="M10 3.500A4 4 0 1 0 10 9.500" fill="none" stroke="#d98a1e" stroke-width="2"/></svg>Autodesk CFD 2019...</div>
  <div class="tray ms-auto d-flex align-items-center">
    <svg width="7" height="5"><path d="M.5 4.500L3.500 1l3 3.500" fill="none" stroke="#333"/></svg>
    <svg class="tr7" width="10" height="7"><rect y="1" width="10" height="5" fill="#333"/></svg>
    <svg class="tr4" width="10" height="10"><circle cx="5" cy="5" r="4.500" fill="none" stroke="#333"/><path d="M.5 5h9M5 .5v9" stroke="#333"/></svg>
    <svg class="tr4" width="9" height="8"><path d="M0 3h2l2-2v6L2 5H0z" fill="#333"/><path d="M6 2c1 1 1 3 0 4M8 1c1 2 1 4 0 6" fill="none" stroke="#999"/></svg>
    <span class="tr8">ENG</span>
    <span class="clock text-center">11:11<br>28.04.2020</span>
    <svg class="ntf" width="10" height="9"><path d="M0 0h10v7H4L2 9V7H0z" fill="#333"/></svg>
  </div>
</footer>

<div class="dlg position-absolute">
  <div class="dlghd d-flex align-items-center">
    <svg width="12" height="12" viewBox="0 0 13 13"><rect width="13" height="13" rx="1" fill="#fbd9a5"/><path d="M10 3.500A4 4 0 1 0 10 9.500" fill="none" stroke="#d98a1e" stroke-width="2"/></svg>
    <span class="ms-1">Решатель</span>
    <svg class="ms-auto me-1" width="8" height="8"><path d="M1 1l6 6M7 1l-6 6" stroke="#333"/></svg>
  </div>
  <div class="dlgbody d-flex">
    <svg width="18" height="18" viewBox="0 0 18 18"><circle cx="9" cy="9" r="9" fill="#e8341c"/><path d="M5 5l8 8M13 5l-8 8" stroke="#fff" stroke-width="1.700"/></svg>
    <div>
      <div class="dlgh1">Анализ был остановлен из-за неожиданного завершения процедуры<br>решателя</div>
      <p class="dlgtx">Пожалуйста, обратитесь к обсуждению на форуме, нажав кнопку "Обсуждение<br>форума" на вкладке "Сообщества".<br>Пользователи с активной учетной записью подписки также могут<br>проконсультироваться  в Центре Подписки, нажав кнопку "Центр подписки" на<br>панели Инфоцентра в верхнем углу пользовательского интерфейса.</p>
      <a class="dlglnk" href="#">Подробнее...</a>
    </div>
  </div>
  <div class="dlgft d-flex justify-content-end">
    <button type="button" class="btn clsbtn">Закрыть</button>
  </div>
</div>
<script src="https://cdn.jsdelivr.net/npm/bootstrap@5.3.0/dist/js/bootstrap.bundle.min.js"></script>
</body>
</html>
